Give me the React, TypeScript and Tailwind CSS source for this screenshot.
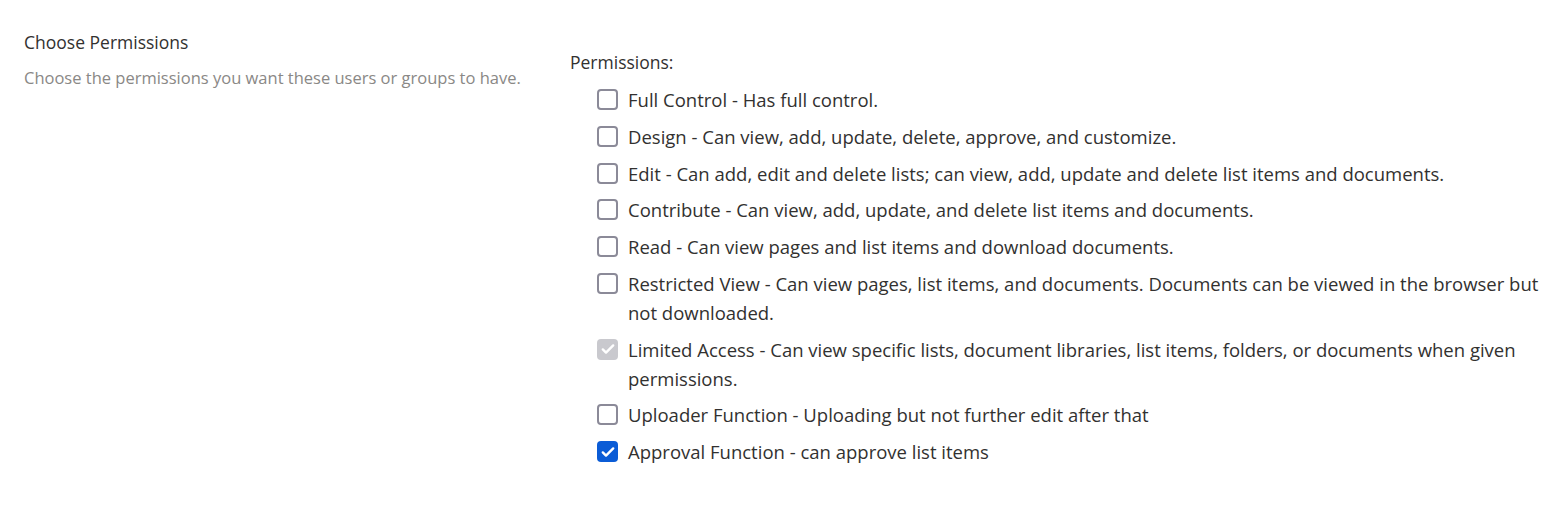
type Perm = { label: string; state: 'off' | 'on' | 'locked' };

const perms: Perm[] = [
  { label: 'Full Control - Has full control.', state: 'off' },
  { label: 'Design - Can view, add, update, delete, approve, and customize.', state: 'off' },
  { label: 'Edit - Can add, edit and delete lists; can view, add, update and delete list items and documents.', state: 'off' },
  { label: 'Contribute - Can view, add, update, and delete list items and documents.', state: 'off' },
  { label: 'Read - Can view pages and list items and download documents.', state: 'off' },
  { label: 'Restricted View - Can view pages, list items, and documents. Documents can be viewed in the browser but not downloaded.', state: 'off' },
  { label: 'Limited Access - Can view specific lists, document libraries, list items, folders, or documents when given permissions.', state: 'locked' },
  { label: 'Uploader Function - Uploading but not further edit after that', state: 'off' },
  { label: 'Approval Function - can approve list items', state: 'on' },
];

const Check = () => (
  <svg viewBox="0 0 20 20" className="h-[16px] w-[16px]" fill="none">
    <path d="M3.5 10.5l4 4 9-9" stroke="white" strokeWidth="3" strokeLinecap="round" strokeLinejoin="round" />
  </svg>
);

const Box = ({ state }: { state: Perm['state'] }) => {
  if (state === 'on')
    return (
      <span className="mt-[4px] flex h-[21px] w-[21px] shrink-0 items-center justify-center rounded-[4px] bg-[#0b5cd6]">
        <Check />
      </span>
    );
  if (state === 'locked')
    return (
      <span className="mt-[4px] flex h-[21px] w-[21px] shrink-0 items-center justify-center rounded-[4px] bg-[#c9c9ce]">
        <Check />
      </span>
    );
  return <span className="mt-[4px] h-[21px] w-[21px] shrink-0 rounded-[4px] border-[2.5px] border-[#8b8a98] bg-white" />;
};

export default function App() {
  return (
    <div className="flex min-h-screen bg-white pt-[29px] font-['Open_Sans',sans-serif] text-[#323130]">
      <div className="w-[570px] shrink-0 pl-6">
        <h2 className="text-[17.5px] leading-[26px]">Choose Permissions</h2>
        <p className="mt-[11px] text-[16.5px] leading-[24px] text-[#8a8886]">
          Choose the permissions you want these users or groups to have.
        </p>
      </div>
      <div className="flex-1 pr-5 pt-[19px]">
        <div className="text-[17.5px] leading-[29px]">Permissions:</div>
        <ul className="mt-[8px] flex flex-col gap-[7.75px] pl-[27px]">
          {perms.map((p) => (
            <li key={p.label} className="flex items-start gap-[10px]">
              <Box state={p.state} />
              <span className="text-[18.5px] leading-[29px]">{p.label}</span>
            </li>
          ))}
        </ul>
      </div>
    </div>
  );
}
